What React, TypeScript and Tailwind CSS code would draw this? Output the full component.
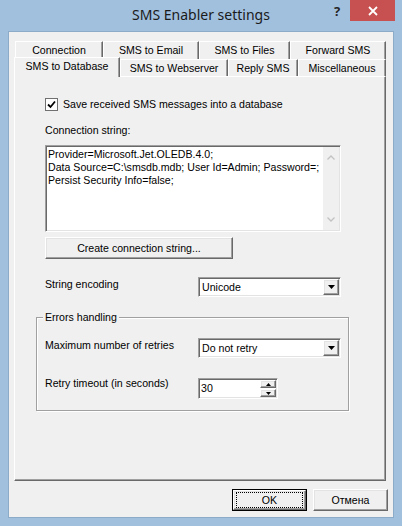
const raised =
  "bg-[#f0f0f0] border border-t-white border-l-white border-r-[#696969] border-b-[#696969] shadow-[inset_-1px_-1px_#a0a0a0,inset_1px_1px_#e3e3e3]"
const sunken =
  "bg-white border border-t-[#a0a0a0] border-l-[#a0a0a0] border-r-white border-b-white shadow-[inset_1px_1px_#696969,inset_-1px_-1px_#e3e3e3]"

function Tab({ label, width, selected }: { label: string; width: string; selected?: boolean }) {
  if (selected) {
    return (
      <div
        className={`${width} h-[20px] -mb-[1px] relative z-10 bg-[#f0f0f0] border-t border-l border-r border-t-white border-l-white border-r-[#696969] shadow-[inset_-1px_0_#a0a0a0] flex items-center justify-center pb-[3px] whitespace-nowrap`}
      >
        {label}
      </div>
    )
  }
  return (
    <div
      className={`${width} h-full bg-[#f0f0f0] border-t border-l border-r border-t-white border-l-white border-r-[#696969] shadow-[inset_-1px_0_#a0a0a0] flex items-center justify-center whitespace-nowrap`}
    >
      {label}
    </div>
  )
}

function DropArrow() {
  return (
    <svg width="7" height="4" viewBox="0 0 7 4">
      <polygon points="0,0 7,0 3.5,4" fill="#000" />
    </svg>
  )
}

function Combo({ value }: { value: string }) {
  return (
    <div className={`${sunken} w-[143px] h-[20px] flex items-center p-[1px]`}>
      <span className="flex-1 pl-[2px]">{value}</span>
      <div className={`${raised} w-[16px] h-full flex items-center justify-center`}>
        <DropArrow />
      </div>
    </div>
  )
}

function Chevron({ up }: { up?: boolean }) {
  return (
    <svg width="8" height="5" viewBox="0 0 8 5">
      <path d={up ? "M0.5 4.5L4 1L7.5 4.5" : "M0.5 0.5L4 4L7.5 0.5"} stroke="#c2c2c2" strokeWidth="1.3" fill="none" />
    </svg>
  )
}

export default function App() {
  return (
    <div className="w-[402px] h-[526px] bg-[#a1c0de] flex flex-col font-['Liberation_Sans',Arial,sans-serif] text-[10.6px] leading-[13px] text-black">
      {/* title bar */}
      <div className="h-[31px] shrink-0 grid grid-cols-[1fr_auto_1fr] items-start">
        <div />
        <div className="pt-[5px] font-['Noto_Sans',sans-serif] text-[14px] leading-[20px] text-[#1a1a1a] whitespace-nowrap">
          SMS Enabler settings
        </div>
        <div className="flex justify-end pr-[7px]">
          <div className="w-[26px] h-[21px] flex items-center justify-center pt-[2px] font-['Noto_Sans',sans-serif] font-bold text-[13px] text-[#262626]">
            ?
          </div>
          <div className="w-[45px] h-[21px] bg-[#c75050] flex items-center justify-center">
            <svg width="10" height="10" viewBox="0 0 10 10">
              <path d="M1 1L9 9M9 1L1 9" stroke="#fff" strokeWidth="1.8" />
            </svg>
          </div>
        </div>
      </div>

      {/* client area */}
      <div className="mx-[8px] mb-[8px] flex-1 bg-[#f0f0f0] border border-[#8cabc9] flex flex-col pt-[9px]">
        <div className="ml-[6px] h-[18px] flex">
          <Tab label="Connection" width="w-[88px]" />
          <Tab label="SMS to Email" width="w-[96px]" />
          <Tab label="SMS to Files" width="w-[91px]" />
          <Tab label="Forward SMS" width="w-[96px]" />
        </div>
        <div className="ml-[5px] h-[17px] flex items-end">
          <Tab label="SMS to Database" width="w-[106px]" selected />
          <Tab label="SMS to Webserver" width="w-[108px]" />
          <Tab label="Reply SMS" width="w-[70px]" />
          <Tab label="Miscellaneous" width="w-[88px]" />
        </div>

        {/* tab page */}
        <div className="ml-[5px] w-[372px] h-[405px] shrink-0 border border-t-white border-l-white border-r-[#696969] border-b-[#696969] shadow-[inset_-1px_-1px_#a0a0a0] flex flex-col">
          <div className="pl-[30px] pt-[21px] flex flex-col">
            <div className="flex items-center gap-[5px] h-[13px]">
              <div className="w-[13px] h-[13px] bg-white border border-[#707070] flex items-center justify-center">
                <svg width="9" height="9" viewBox="0 0 9 9">
                  <path d="M1 4.5L3.5 7L8 1.5" stroke="#000" strokeWidth="1.8" fill="none" />
                </svg>
              </div>
              <span>Save received SMS messages into a database</span>
            </div>

            <div className="mt-[13px]">Connection string:</div>

            <div className={`${sunken} mt-[8px] w-[296px] h-[87px] flex p-[1px]`}>
              <div className="flex-1 pl-[1px] pt-[1px] text-[#000]">
                <div>Provider=Microsoft.Jet.OLEDB.4.0;</div>
                <div>Data Source=C:\smsdb.mdb; User Id=Admin; Password=;</div>
                <div>Persist Security Info=false;</div>
              </div>
              <div className="w-[16px] bg-[#f0f0f0] flex flex-col items-center justify-between py-[8px]">
                <Chevron up />
                <Chevron />
              </div>
            </div>

            <div className={`${raised} mt-[5px] w-[188px] h-[22px] flex items-center justify-center`}>
              Create connection string...
            </div>

            <div className="mt-[18px] flex items-start">
              <div className="w-[153px] pt-[1px]">String encoding</div>
              <Combo value="Unicode" />
            </div>
          </div>

          <fieldset className="ml-[21px] mt-[14px] w-[313px] min-w-0 border border-[#a0a0a0] shadow-[inset_1px_1px_#fff,1px_1px_#fff] pl-[8px] pb-[11px]">
            <legend className="-ml-[2px] px-[2px] bg-[#f0f0f0]">Errors handling</legend>
            <div className="mt-[14px] flex items-start">
              <div className="w-[153px] pt-[1px]">Maximum number of retries</div>
              <Combo value="Do not retry" />
            </div>
            <div className="mt-[20px] flex items-start">
              <div className="w-[153px] -mt-[1px]">Retry timeout (in seconds)</div>
              <div className={`${sunken} w-[80px] h-[21px] flex items-stretch p-[1px]`}>
                <span className="flex-1 pl-[1px] flex items-center">30</span>
                <div className="w-[16px] flex flex-col gap-[1px]">
                  <div className={`${raised} flex-1 flex items-center justify-center`}>
                    <svg width="5" height="3" viewBox="0 0 5 3">
                      <polygon points="2.5,0 5,3 0,3" fill="#000" />
                    </svg>
                  </div>
                  <div className={`${raised} flex-1 flex items-center justify-center`}>
                    <svg width="5" height="3" viewBox="0 0 5 3">
                      <polygon points="0,0 5,0 2.5,3" fill="#000" />
                    </svg>
                  </div>
                </div>
              </div>
            </div>
          </fieldset>
        </div>

        {/* dialog buttons */}
        <div className="mt-[8px] pr-[5px] flex justify-end gap-[6px]">
          <div className="w-[75px] h-[22px] border border-black flex">
            <div className={`${raised} flex-1 flex px-[2px] py-[1px]`}>
              <div className="flex-1 border border-dotted border-black flex items-center justify-center">OK</div>
            </div>
          </div>
          <div className={`${raised} w-[75px] h-[22px] flex items-center justify-center`}>Отмена</div>
        </div>
      </div>
    </div>
  )
}
